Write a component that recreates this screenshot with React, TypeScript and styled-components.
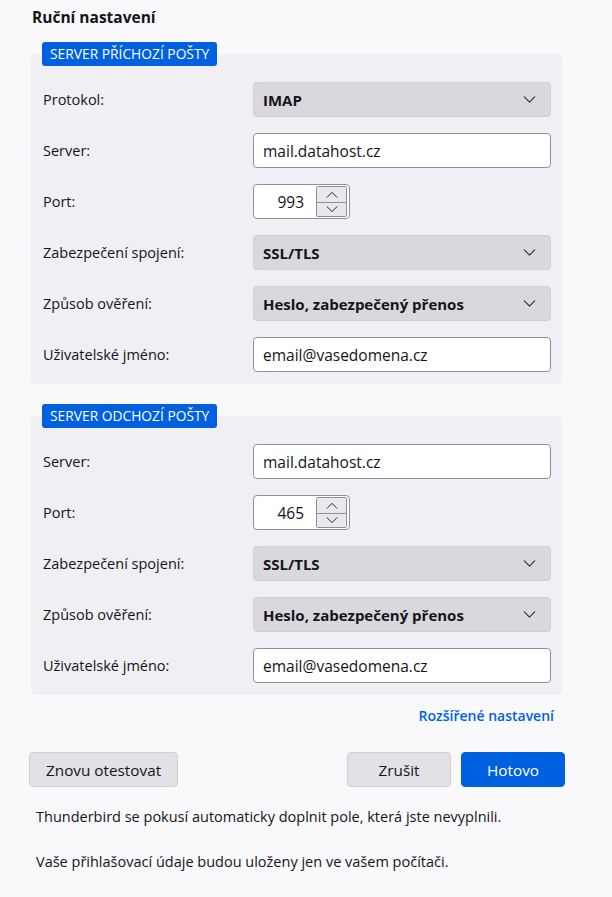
import styled, { createGlobalStyle } from 'styled-components'

const GlobalStyle = createGlobalStyle`
    body {
        margin: 0;
        background: #f9f9fb;
        font-family: 'Open Sans', 'Noto Sans', sans-serif;
        color: #15141a;
    }
`

const Page = styled.div`
    width: 536px;
    padding: 6px 0 0 29px;
`

const Title = styled.h1`
    margin: 0 0 0 3px;
    font-size: 15.5px;
    line-height: 22px;
    font-weight: 700;
`

const Section = styled.section`
    margin: 26px 3px 0 2px;
    & + & {
        margin-top: 32px;
    }
`

const Panel = styled.div`
    background: #f0f0f4;
    border-radius: 5px;
    padding: 0 11px 12px 12px;
    display: flex;
    flex-direction: column;
`

const Badge = styled.div`
    align-self: flex-start;
    margin: -12px 0 16px -1px;
    height: 24px;
    padding: 0 8px;
    background: #0061e0;
    color: #fff;
    border-radius: 3px;
    font-size: 13.8px;
    line-height: 24px;
`

const Rows = styled.div`
    display: flex;
    flex-direction: column;
    gap: 16px;
`

const Row = styled.div`
    display: grid;
    grid-template-columns: 210px 298px;
    align-items: center;
    height: 35px;
`

const Label = styled.label`
    font-size: 14.5px;
`

const Select = styled.div`
    height: 35px;
    box-sizing: border-box;
    background: #d9d9dd;
    border: 1px solid #cfcfd4;
    border-radius: 4px;
    display: flex;
    align-items: center;
    justify-content: space-between;
    padding: 0 14px 0 9px;
    font-size: 15px;
    font-weight: 700;
`

const TextInput = styled.div`
    height: 35px;
    box-sizing: border-box;
    background: #fff;
    border: 1px solid #8f8f9d;
    border-radius: 4px;
    display: flex;
    align-items: center;
    padding: 0 9px;
    font-size: 15.5px;
`

const PortBox = styled(TextInput)`
    width: 97px;
    padding: 0 2px 0 0;
    justify-content: space-between;
`

const PortValue = styled.span`
    flex: 1;
    text-align: right;
    padding-right: 12px;
`

const Spinner = styled.div`
    width: 31px;
    height: 31px;
    box-sizing: border-box;
    border: 1px solid #8f8f9d;
    border-radius: 2px;
    display: grid;
    grid-template-rows: 1fr 1fr;
    overflow: hidden;
`

const SpinHalf = styled.div<{ $down?: boolean }>`
    background: #e9e9ed;
    display: flex;
    align-items: center;
    justify-content: center;
    border-top: ${(p) => (p.$down ? '1px solid #8f8f9d' : 'none')};
`

const LinkRow = styled.div`
    display: flex;
    justify-content: flex-end;
    margin: 11px 11px 0 0;
`

const Link = styled.a`
    color: #0061e0;
    font-size: 14px;
    font-weight: 600;
    text-decoration: none;
`

const Buttons = styled.div`
    display: flex;
    gap: 10px;
    margin-top: 27px;
`

const Button = styled.button<{ $primary?: boolean }>`
    height: 35px;
    min-width: 104px;
    padding: 0 16px;
    border-radius: 4px;
    font-family: inherit;
    font-size: 15.3px;
    border: 1px solid ${(p) => (p.$primary ? '#0061e0' : '#cfcfd8')};
    background: ${(p) => (p.$primary ? '#0061e0' : '#e2e2e6')};
    color: ${(p) => (p.$primary ? '#fff' : '#15141a')};
`

const Spacer = styled.div`
    flex: 1;
`

const Note = styled.p`
    margin: 20px 0 0 7px;
    font-size: 14.5px;
    line-height: 20px;
    & + & {
        margin-top: 25px;
    }
`

const Chevron = ({ up = false, size = 13 }: { up?: boolean; size?: number }) => (
    <svg width={size} height={size / 2 + 1} viewBox="0 0 14 8" fill="none">
        <path
            d={up ? 'M1 7.5 7 1.5l6 6' : 'M1 0.5l6 6 6-6'}
            stroke="#15141a"
            strokeWidth="1.1"
        />
    </svg>
)

type Field = { label: string; kind: 'select' | 'text' | 'port'; value: string }

const incoming: Field[] = [
    { label: 'Protokol:', kind: 'select', value: 'IMAP' },
    { label: 'Server:', kind: 'text', value: 'mail.datahost.cz' },
    { label: 'Port:', kind: 'port', value: '993' },
    { label: 'Zabezpečení spojení:', kind: 'select', value: 'SSL/TLS' },
    { label: 'Způsob ověření:', kind: 'select', value: 'Heslo, zabezpečený přenos' },
    { label: 'Uživatelské jméno:', kind: 'text', value: 'email@vasedomena.cz' },
]

const outgoing: Field[] = [
    { label: 'Server:', kind: 'text', value: 'mail.datahost.cz' },
    { label: 'Port:', kind: 'port', value: '465' },
    { label: 'Zabezpečení spojení:', kind: 'select', value: 'SSL/TLS' },
    { label: 'Způsob ověření:', kind: 'select', value: 'Heslo, zabezpečený přenos' },
    { label: 'Uživatelské jméno:', kind: 'text', value: 'email@vasedomena.cz' },
]

const Control = ({ field }: { field: Field }) => {
    if (field.kind === 'select')
        return (
            <Select>
                {field.value}
                <Chevron />
            </Select>
        )
    if (field.kind === 'port')
        return (
            <PortBox>
                <PortValue>{field.value}</PortValue>
                <Spinner>
                    <SpinHalf>
                        <Chevron up size={12} />
                    </SpinHalf>
                    <SpinHalf $down>
                        <Chevron size={12} />
                    </SpinHalf>
                </Spinner>
            </PortBox>
        )
    return <TextInput>{field.value}</TextInput>
}

const ServerSection = ({ title, fields }: { title: string; fields: Field[] }) => (
    <Section>
        <Panel>
            <Badge>{title}</Badge>
            <Rows>
                {fields.map((f) => (
                    <Row key={f.label}>
                        <Label>{f.label}</Label>
                        <Control field={f} />
                    </Row>
                ))}
            </Rows>
        </Panel>
    </Section>
)

export default function App() {
    return (
        <Page>
            <GlobalStyle />
            <Title>Ruční nastavení</Title>
            <ServerSection title="SERVER PŘÍCHOZÍ POŠTY" fields={incoming} />
            <ServerSection title="SERVER ODCHOZÍ POŠTY" fields={outgoing} />
            <LinkRow>
                <Link href="#">Rozšířené nastavení</Link>
            </LinkRow>
            <Buttons>
                <Button>Znovu otestovat</Button>
                <Spacer />
                <Button>Zrušit</Button>
                <Button $primary>Hotovo</Button>
            </Buttons>
            <Note>Thunderbird se pokusí automaticky doplnit pole, která jste nevyplnili.</Note>
            <Note>Vaše přihlašovací údaje budou uloženy jen ve vašem počítači.</Note>
        </Page>
    )
}
